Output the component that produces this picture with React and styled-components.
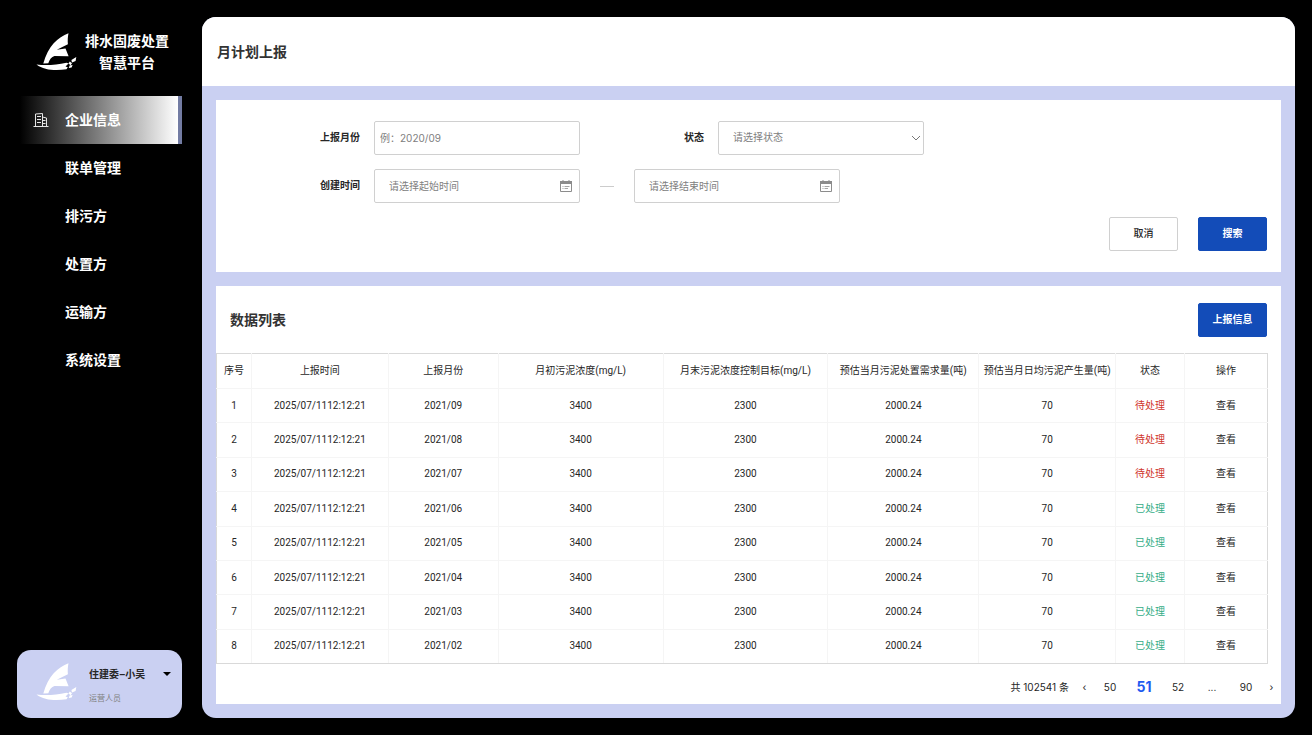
import React, { useState } from "react"
import styled, { createGlobalStyle, css } from "styled-components"

const menu = ["企业信息", "联单管理", "排污方", "处置方", "运输方", "系统设置"]

const columns = [
  { title: "序号", width: 35 },
  { title: "上报时间", width: 137 },
  { title: "上报月份", width: 110 },
  { title: "月初污泥浓度(mg/L)", width: 165 },
  { title: "月末污泥浓度控制目标(mg/L)", width: 165 },
  { title: "预估当月污泥处置需求量(吨)", width: 151 },
  { title: "预估当月日均污泥产生量(吨)", width: 137 },
  { title: "状态", width: 69 },
  { title: "操作", width: 83 },
]
const totalWidth = columns.reduce((sum, c) => sum + c.width, 0)

const rows = ["09", "08", "07", "06", "05", "04", "03", "02"].map((m, i) => ({
  id: i + 1,
  time: "2025/07/1112:12:21",
  month: `2021/${m}`,
  start: "3400",
  target: "2300",
  demand: "2000.24",
  daily: "70",
  done: i > 2,
}))

const BoatLogo = () => (
  <Boat viewBox="0 0 41 40" aria-hidden="true">
    <path d="M32.5 1.200C22 5 12 14 7.300 31.500L12.300 31.300C13.500 27.500 15.500 24.800 18.500 24L32.600 24.300L29.500 16.600L20.800 17.800L31.900 12.200C31.600 8.500 31.700 5 32.500 1.200Z" />
    <path d="M0.500 32.500C10 33.600 20 33 30.500 30.700L32.500 31.500L29.500 34.500L31.800 35.200L30.500 37.200C21 38.800 8 38.600 0.500 32.500Z" />
    <path d="M40.300 25L39.600 29L36 30.600L35.400 28ZM33.800 29.600L36 31.200L34.600 33.200L32.400 31.600ZM36.600 33L35.600 35.600L32.800 36L33.600 33.600Z" />
  </Boat>
)

const BuildingIcon = () => (
  <svg width="16" height="16" viewBox="0 0 16 16" fill="none" stroke="currentColor" aria-hidden="true">
    <path d="M0.500 14.500H15.500M2.500 14.500V2L9.500 1.500V14.500M9.500 5L13.500 6V14.500M4 4.500H8M4 7.500H8M4 10.500H8M10 8.500H12.500M10 11.500H12.500" />
  </svg>
)

const CalendarIcon = () => (
  <svg width="12" height="12" viewBox="0 0 12 12" aria-hidden="true">
    <path d="M0.500 1.500H11.500V11.500H0.500Z" fill="none" stroke="#8c8c8c" />
    <path d="M0 1H12V4H0ZM2.500 0H3.500V2H2.500ZM8.500 0H9.500V2H8.500Z" fill="#8c8c8c" />
    <path d="M2.500 6.500H3.500M4.500 6.500H9.500M2.500 8.500H3.500M4.500 8.500H8" stroke="#a6a6a6" />
  </svg>
)

const DateField = ({ id, label, placeholder }) => (
  <Control>
    <Input id={id} type="text" aria-label={label} placeholder={placeholder} $indent />
    <Adornment $right={8}>
      <CalendarIcon />
    </Adornment>
  </Control>
)

const App = () => {
  const [active, setActive] = useState("企业信息")

  return (
    <>
      <GlobalStyle />
      <Page>
        <Sidebar>
          <Brand>
            <BoatLogo />
            <BrandName>
              排水固废处置
              <br />
              智慧平台
            </BrandName>
          </Brand>
          <Nav>
            {menu.map(name => (
              <NavLink key={name} href="#" $active={name === active} onClick={() => setActive(name)}>
                <NavIcon>{name === "企业信息" && <BuildingIcon />}</NavIcon>
                {name}
              </NavLink>
            ))}
          </Nav>
          <UserCard type="button">
            <BoatLogo />
            <UserText>
              <UserName>住建委–小吴</UserName>
              <UserRole>运营人员</UserRole>
            </UserText>
            <Caret viewBox="0 0 8 4" aria-hidden="true">
              <path d="M0 0H8L4 4Z" fill="currentColor" />
            </Caret>
          </UserCard>
        </Sidebar>

        <Main>
          <PageHeader>
            <Title as="h1">月计划上报</Title>
          </PageHeader>
          <Content>
            {/* Filtri di ricerca */}
            <SearchCard onSubmit={e => e.preventDefault()}>
              <FormRow>
                <Label htmlFor="month">上报月份</Label>
                <Control>
                  <Input id="month" type="text" placeholder="例：2020/09" />
                </Control>
                <Label htmlFor="status" $second>状态</Label>
                <Control>
                  <Select id="status" defaultValue="">
                    <option value="">请选择状态</option>
                    <option value="todo">待处理</option>
                    <option value="done">已处理</option>
                  </Select>
                  <Adornment $right={3}>
                    <svg width="10" height="6" viewBox="0 0 10 6" fill="none" stroke="#777" aria-hidden="true">
                      <path d="M1 1L5 5L9 1" />
                    </svg>
                  </Adornment>
                </Control>
              </FormRow>
              <FormRow>
                <Label htmlFor="from">创建时间</Label>
                <DateField id="from" label="创建时间" placeholder="请选择起始时间" />
                <Dash />
                <DateField id="to" label="结束时间" placeholder="请选择结束时间" />
              </FormRow>
              <Actions>
                <Button type="reset">取消</Button>
                <Button type="submit" $primary>搜索</Button>
              </Actions>
            </SearchCard>

            <ListCard>
              <ListHeader>
                <Title>数据列表</Title>
                <Button type="button" $primary>上报信息</Button>
              </ListHeader>
              <Table>
                <colgroup>
                  {columns.map(c => (
                    <Col key={c.title} $width={c.width} />
                  ))}
                </colgroup>
                <thead>
                  <tr>
                    {columns.map(c => (
                      <th key={c.title} scope="col">{c.title}</th>
                    ))}
                  </tr>
                </thead>
                <tbody>
                  {rows.map(r => (
                    <tr key={r.id}>
                      <td>{r.id}</td>
                      <td>{r.time}</td>
                      <td>{r.month}</td>
                      <td>{r.start}</td>
                      <td>{r.target}</td>
                      <td>{r.demand}</td>
                      <td>{r.daily}</td>
                      <td>
                        <Status $done={r.done}>{r.done ? "已处理" : "待处理"}</Status>
                      </td>
                      <td>
                        <ViewLink href="#">查看</ViewLink>
                      </td>
                    </tr>
                  ))}
                </tbody>
              </Table>
              <Pager aria-label="分页">
                <Total>共 102541 条</Total>
                <Arrow type="button">‹</Arrow>
                <PageButton type="button">50</PageButton>
                <PageButton type="button" $current>51</PageButton>
                <PageButton type="button">52</PageButton>
                <PageGap>...</PageGap>
                <PageButton type="button">90</PageButton>
                <Arrow type="button">›</Arrow>
              </Pager>
            </ListCard>
          </Content>
        </Main>
      </Page>
    </>
  )
}

const GlobalStyle = createGlobalStyle`
  * {
    box-sizing: border-box;
  }

  body {
    margin: 0;
    background: #000;
    color: #262626;
    font: 10px/16px Roboto, "Noto Sans CJK SC", sans-serif;
  }

  button, input, select {
    font: inherit;
    color: inherit;
  }
`

const Page = styled.div`
  display: flex;
  gap: 20px;
  min-height: 100vh;
  padding: 17px 17px 17px 0;
`

const Sidebar = styled.aside`
  display: flex;
  flex-direction: column;
  flex: 0 0 182px;
`

const Boat = styled.svg`
  width: 41px;
  height: 40px;
  flex: none;
  fill: #fff;
`

const Brand = styled.div`
  display: flex;
  align-items: center;
  gap: 8px;
  height: 70px;
  padding-left: 36px;
`

const BrandName = styled.div`
  color: #fff;
  font-size: 14px;
  font-weight: 700;
  line-height: 22px;
  text-align: center;
  white-space: nowrap;
`

const Nav = styled.nav`
  display: flex;
  flex-direction: column;
  margin: 9px 0 auto 20px;
`

const NavLink = styled.a`
  display: flex;
  align-items: center;
  height: 48px;
  color: #fff;
  font-size: 14px;
  font-weight: 700;
  text-decoration: none;
  border-right: 4px solid transparent;

  ${p => p.$active && css`
    background: linear-gradient(90deg, #000, #fff) padding-box;
    border-right-color: #737ca3;
  `}
`

const NavIcon = styled.span`
  display: flex;
  width: 45px;
  padding-left: 13px;
  color: #e6e6e6;
`

const UserCard = styled.button`
  display: flex;
  align-items: center;
  height: 68px;
  margin-left: 17px;
  padding: 0 11px 0 19px;
  border: 0;
  border-radius: 14px;
  background: #cad0f2;
  text-align: left;

  ${Boat} {
    margin-bottom: 4px;
  }
`

const UserText = styled.span`
  display: flex;
  flex-direction: column;
  flex: 1;
  gap: 8px;
  padding: 5px 0 0 12px;
`

const UserName = styled.span`
  font-weight: 700;
`

const UserRole = styled.span`
  color: #808080;
  font-size: 8px;
`

const Caret = styled.svg`
  width: 8px;
  height: 4px;
  margin-bottom: 20px;
  color: #000;
`

const Main = styled.main`
  display: flex;
  flex-direction: column;
  flex: 1;
  min-width: 0;
  overflow: hidden;
  border-radius: 14px;
  background: #cad0f2;
`

const PageHeader = styled.header`
  display: flex;
  align-items: center;
  height: 69px;
  padding: 0 15px;
  background: #fff;
`

const Title = styled.h2`
  margin: 0;
  font-size: 14px;
  font-weight: 700;
  line-height: 22px;
  color: #333;
`

const Content = styled.div`
  display: flex;
  flex-direction: column;
  flex: 1;
  gap: 14px;
  padding: 14px;
`

const SearchCard = styled.form`
  display: flex;
  flex-direction: column;
  gap: 14px;
  padding: 21px 14px;
  background: #fff;
`

const FormRow = styled.div`
  display: flex;
  align-items: center;
`

const Label = styled.label`
  width: ${p => (p.$second ? 124 : 130)}px;
  font-weight: 700;
  text-align: right;
`

const Control = styled.div`
  position: relative;
  width: 206px;

  ${Label} + & {
    margin-left: 14px;
  }
`

const field = css`
  display: block;
  width: 100%;
  height: 34px;
  border: 1px solid #d0d0d0;
  border-radius: 2px;
  background: #fff;
  color: #808080;
`

const Input = styled.input`
  ${field}
  padding: 0 ${p => (p.$indent ? 14 : 5)}px;
  font-family: Inter, "Noto Sans CJK SC", sans-serif;

  &::placeholder {
    color: #808080;
    opacity: 1;
  }
`

const Select = styled.select`
  ${field}
  padding: 0 14px;
  appearance: none;
`

const Adornment = styled.span`
  position: absolute;
  top: 0;
  bottom: 0;
  right: ${p => p.$right}px;
  display: flex;
  align-items: center;
  pointer-events: none;
`

const Dash = styled.span`
  width: 14px;
  height: 1px;
  margin: 0 20px;
  background: #ccc;
`

const Actions = styled.div`
  display: flex;
  justify-content: flex-end;
  gap: 20px;
`

const Button = styled.button`
  width: 69px;
  height: 34px;
  padding: 0;
  border: 1px solid ${p => (p.$primary ? "#134cb8" : "#d0d0d0")};
  border-radius: 2px;
  background: ${p => (p.$primary ? "#134cb8" : "#fff")};
  color: ${p => (p.$primary ? "#fff" : "#262626")};
  font-weight: ${p => (p.$primary ? 700 : 500)};
  cursor: pointer;
`

const ListCard = styled.section`
  display: flex;
  flex-direction: column;
  flex: 1;
  background: #fff;
`

const ListHeader = styled.div`
  display: flex;
  align-items: center;
  justify-content: space-between;
  height: 67px;
  padding: 0 14px;
`

const Table = styled.table`
  width: calc(100% - 13px);
  height: 311px;
  table-layout: fixed;
  border-collapse: collapse;
  border: 1px solid #d9d9d9;
  text-align: center;

  th, td {
    padding: 0;
    border: 1px solid #f5f5f5;
    font-weight: 400;
    white-space: nowrap;
  }

  thead th {
    height: 35px;
    border-top-color: #d9d9d9;
  }

  tbody tr:last-child td {
    border-bottom-color: #d9d9d9;
  }

  th:first-child, td:first-child {
    border-left-color: #d9d9d9;
  }

  th:last-child, td:last-child {
    border-right-color: #d9d9d9;
  }
`

const Col = styled.col`
  width: ${p => (p.$width / totalWidth) * 100}%;
`

const Status = styled.span`
  color: ${p => (p.$done ? "#36ad88" : "#d0342c")};
`

const ViewLink = styled.a`
  color: inherit;
  text-decoration: none;
`

const Pager = styled.nav`
  display: flex;
  flex: 1;
  align-items: center;
  justify-content: flex-end;
  padding: 6px 1px 0 0;
  font-family: Inter, "Noto Sans CJK SC", sans-serif;
`

const Total = styled.span`
  margin-right: 7px;
`

const PageButton = styled.button`
  width: 34px;
  padding: 0;
  border: 0;
  background: none;
  text-align: center;
  cursor: pointer;

  ${p => p.$current && css`
    color: #1e5af0;
    font-size: 14px;
    font-weight: 700;
  `}
`

const PageGap = styled.span`
  width: 34px;
  text-align: center;
`

const Arrow = styled(PageButton)`
  width: 17px;
`

export default App
